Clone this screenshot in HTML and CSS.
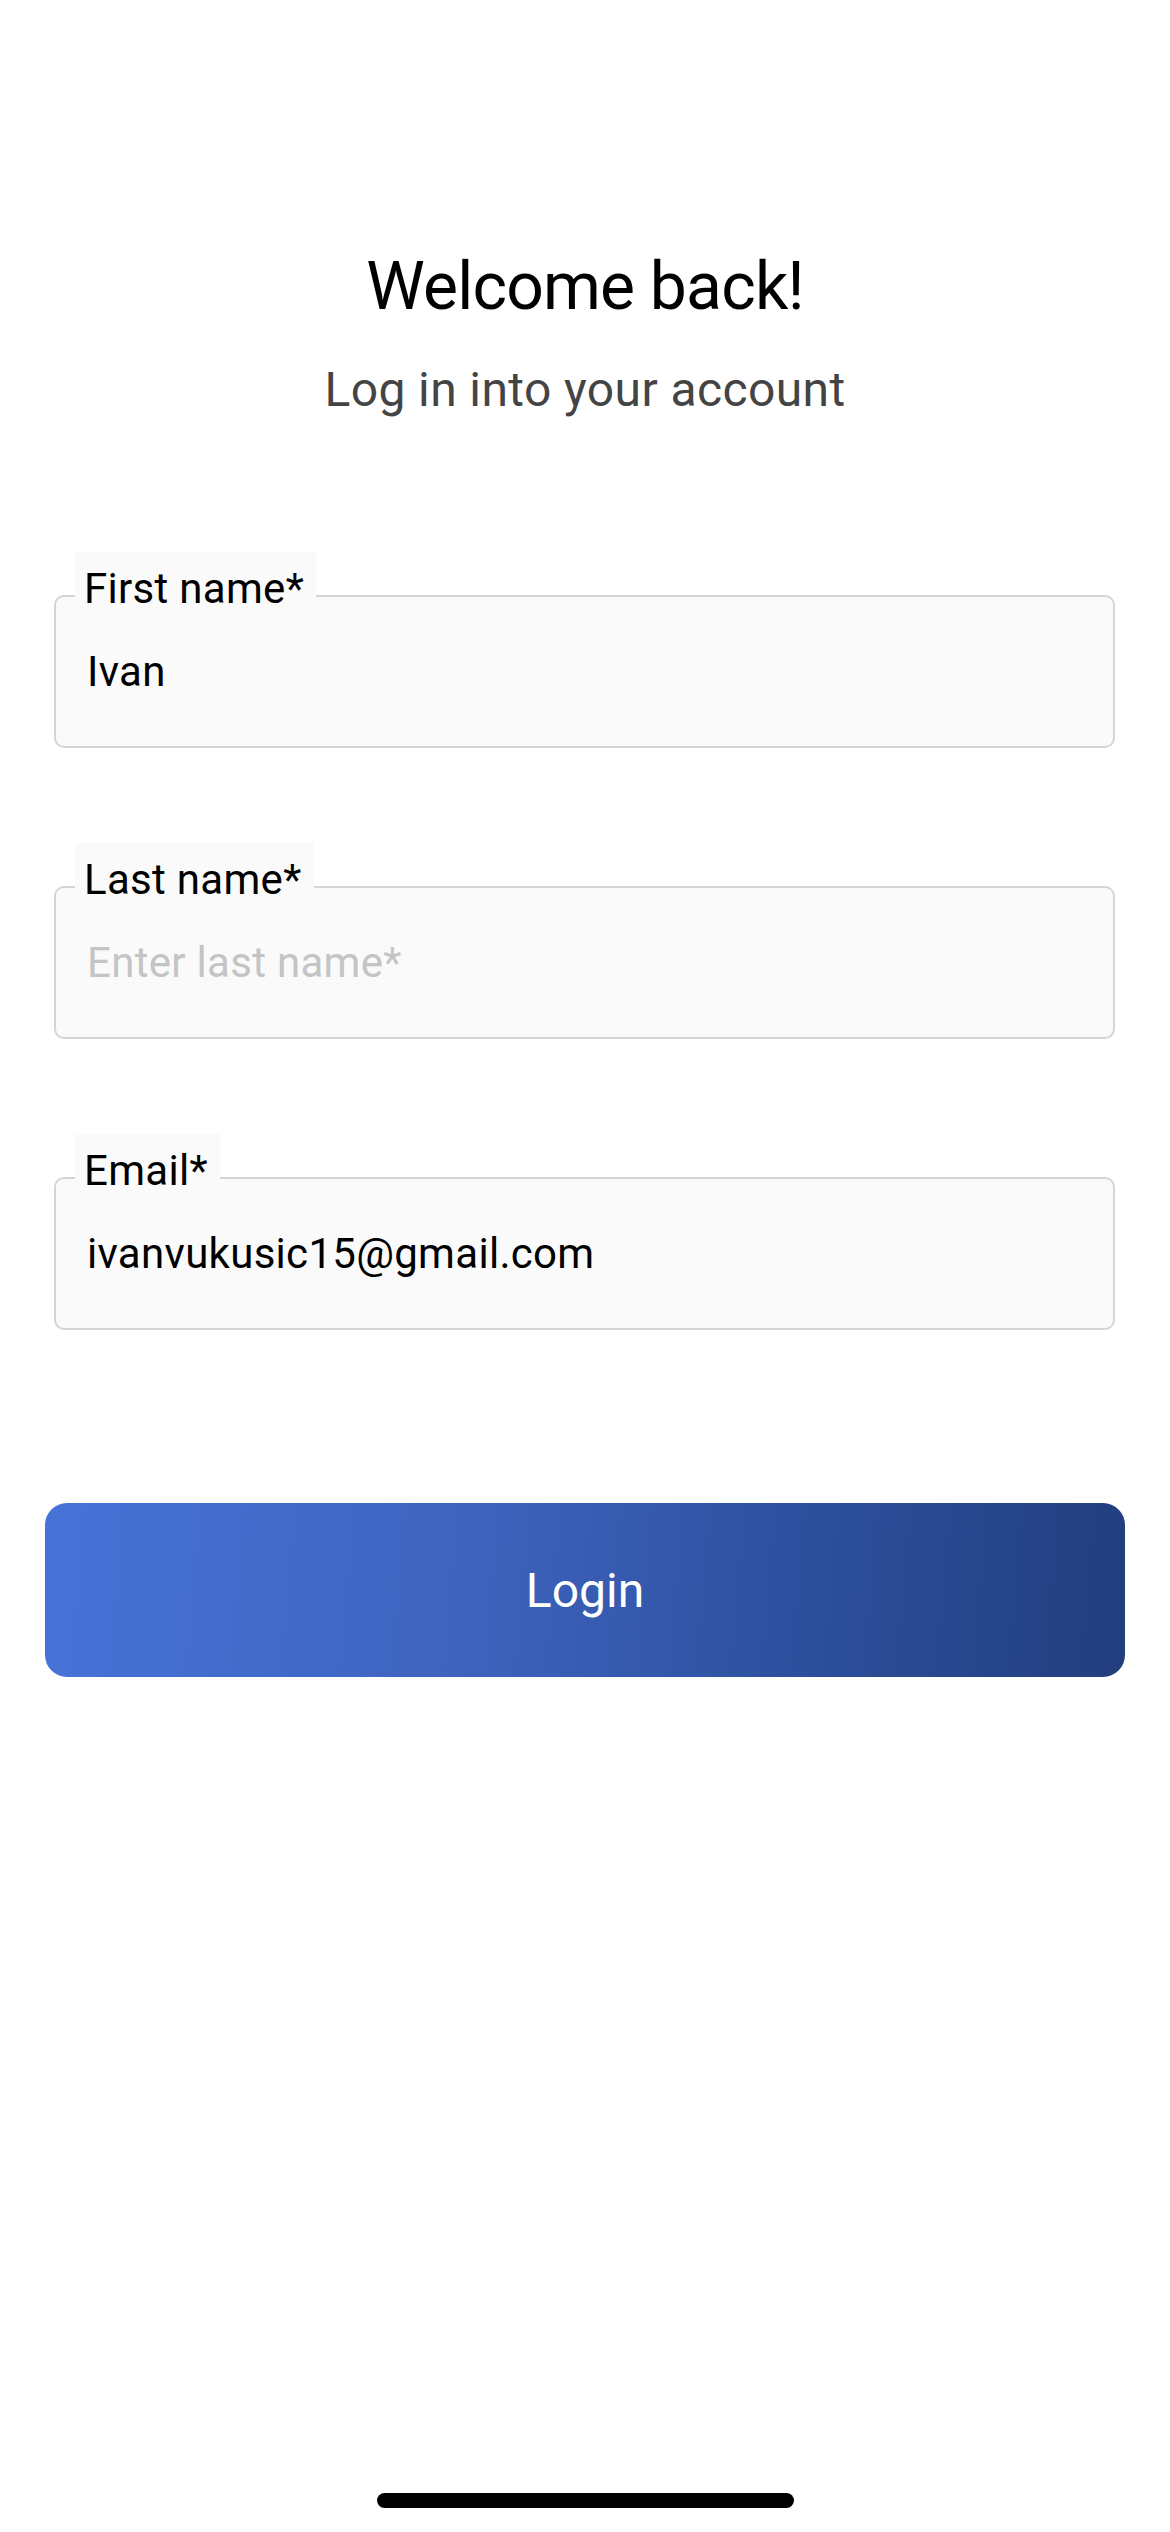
FILE: index.html
```html
<!DOCTYPE html>
<html lang="en">
<head>
<meta charset="utf-8">
<title>Welcome back</title>
<link rel="stylesheet" href="styles.css">
</head>
<body>
<div class="screen">
  <header class="header">
    <h1 class="title">Welcome back!</h1>
    <p class="subtitle">Log in into your account</p>
  </header>

  <form class="form">
    <div class="field">
      <span class="field-label">First name*</span>
      <div class="field-value">Ivan</div>
    </div>
    <div class="field">
      <span class="field-label">Last name*</span>
      <div class="field-value placeholder">Enter last name*</div>
    </div>
    <div class="field">
      <span class="field-label">Email*</span>
      <div class="field-value">ivanvukusic15@gmail.com</div>
    </div>
    <button type="button" class="login-btn">Login</button>
  </form>

  <div class="home-indicator"></div>
</div>
</body>
</html>
```
FILE: styles.css
```css
* { box-sizing: border-box; }

html, body {
  margin: 0;
  padding: 0;
  background: #ffffff;
}

body {
  font-family: Roboto, "Noto Sans", "Liberation Sans", sans-serif;
  color: #000000;
}

.screen {
  width: 1170px;
  height: 2532px;
  display: flex;
  flex-direction: column;
  background: #ffffff;
}

.header {
  padding-top: 247px;
  text-align: center;
}

.title {
  margin: 0;
  font-size: 66px;
  line-height: 80px;
  font-weight: 400;
  letter-spacing: -0.8px;
  color: #000000;
}

.subtitle {
  margin: 33px 0 0;
  font-size: 48px;
  line-height: 60px;
  font-weight: 400;
  letter-spacing: 0.4px;
  color: #444444;
}

.form {
  display: flex;
  flex-direction: column;
  margin: 0;
}

.field {
  position: relative;
  margin: 175px 55px 0 54px;
  height: 153px;
  border: 2px solid #d5d5d5;
  border-radius: 10px;
  background: #fafafa;
  display: flex;
  align-items: center;
  padding: 0 30px 0 31px;
}

.field + .field {
  margin-top: 138px;
}

.field-label {
  position: absolute;
  left: 19px;
  top: -45px;
  padding: 12px 12px 0 9px;
  font-size: 42px;
  line-height: 50px;
  letter-spacing: 0.3px;
  background: #fafafa;
  color: #000000;
}

.field-value {
  font-size: 42px;
  letter-spacing: 0.3px;
  color: #000000;
}

.field-value.placeholder {
  color: #c4c4c4;
}

.login-btn {
  margin: 173px 45px 0 45px;
  height: 174px;
  border: none;
  border-radius: 22px;
  background: linear-gradient(95deg, #4773d8 0%, #3d63bd 40%, #2d4f9d 70%, #223e7e 100%);
  color: #ffffff;
  font-family: Roboto, "Noto Sans", "Liberation Sans", sans-serif;
  font-size: 48px;
  font-weight: 400;
  padding: 0;
}

.home-indicator {
  margin: auto auto 24px;
  width: 417px;
  height: 15px;
  border-radius: 8px;
  background: #000000;
}
```
